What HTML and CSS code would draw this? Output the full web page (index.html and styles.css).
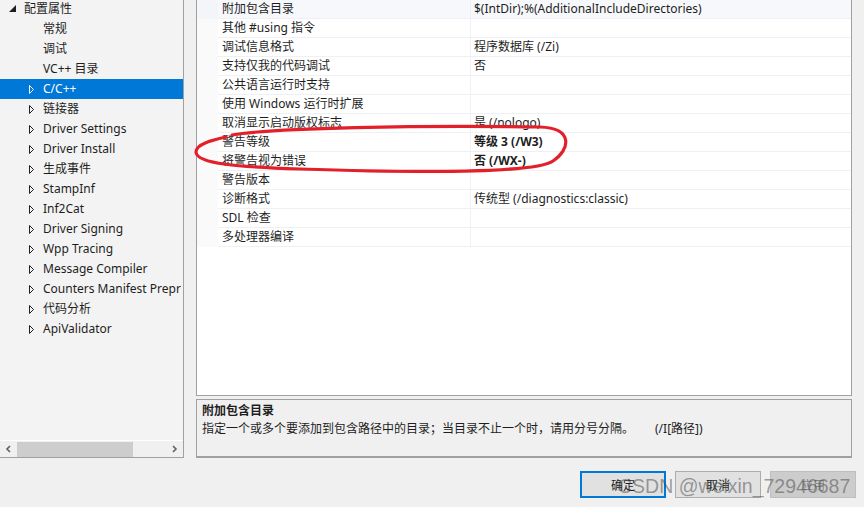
FILE: index.html
```html
<!DOCTYPE html>
<html lang="zh-CN">
<head>
    <meta charset="UTF-8">
    <meta name="viewport" content="width=device-width, initial-scale=1.0">
    <title>属性页</title>
    <link rel="stylesheet" href="styles.css">
</head>
<body>

<div class="window">
    <div class="main">
        <div class="tree">
            <ul class="tree-list">
                <li class="node root">
                    <svg class="caret" width="7" height="7" viewBox="0 0 7 7"><polygon points="7,0 7,7 0,7" fill="#1e1e1e"/></svg>
                    <span class="label">配置属性</span>
                </li>
                <li class="node leaf"><span class="label">常规</span></li>
                <li class="node leaf"><span class="label">调试</span></li>
                <li class="node leaf"><span class="label">VC++ 目录</span></li>
                <li class="node branch selected"><svg class="arrow" width="6" height="9" viewBox="0 0 6 9"><polygon points="0.5,0.5 4.5,4.5 0.5,8.5"/></svg><span class="label">C/C++</span></li>
                <li class="node branch"><svg class="arrow" width="6" height="9" viewBox="0 0 6 9"><polygon points="0.5,0.5 4.5,4.5 0.5,8.5"/></svg><span class="label">链接器</span></li>
                <li class="node branch"><svg class="arrow" width="6" height="9" viewBox="0 0 6 9"><polygon points="0.5,0.5 4.5,4.5 0.5,8.5"/></svg><span class="label">Driver Settings</span></li>
                <li class="node branch"><svg class="arrow" width="6" height="9" viewBox="0 0 6 9"><polygon points="0.5,0.5 4.5,4.5 0.5,8.5"/></svg><span class="label">Driver Install</span></li>
                <li class="node branch"><svg class="arrow" width="6" height="9" viewBox="0 0 6 9"><polygon points="0.5,0.5 4.5,4.5 0.5,8.5"/></svg><span class="label">生成事件</span></li>
                <li class="node branch"><svg class="arrow" width="6" height="9" viewBox="0 0 6 9"><polygon points="0.5,0.5 4.5,4.5 0.5,8.5"/></svg><span class="label">StampInf</span></li>
                <li class="node branch"><svg class="arrow" width="6" height="9" viewBox="0 0 6 9"><polygon points="0.5,0.5 4.5,4.5 0.5,8.5"/></svg><span class="label">Inf2Cat</span></li>
                <li class="node branch"><svg class="arrow" width="6" height="9" viewBox="0 0 6 9"><polygon points="0.5,0.5 4.5,4.5 0.5,8.5"/></svg><span class="label">Driver Signing</span></li>
                <li class="node branch"><svg class="arrow" width="6" height="9" viewBox="0 0 6 9"><polygon points="0.5,0.5 4.5,4.5 0.5,8.5"/></svg><span class="label">Wpp Tracing</span></li>
                <li class="node branch"><svg class="arrow" width="6" height="9" viewBox="0 0 6 9"><polygon points="0.5,0.5 4.5,4.5 0.5,8.5"/></svg><span class="label">Message Compiler</span></li>
                <li class="node branch"><svg class="arrow" width="6" height="9" viewBox="0 0 6 9"><polygon points="0.5,0.5 4.5,4.5 0.5,8.5"/></svg><span class="label">Counters Manifest Prepr</span></li>
                <li class="node branch"><svg class="arrow" width="6" height="9" viewBox="0 0 6 9"><polygon points="0.5,0.5 4.5,4.5 0.5,8.5"/></svg><span class="label">代码分析</span></li>
                <li class="node branch"><svg class="arrow" width="6" height="9" viewBox="0 0 6 9"><polygon points="0.5,0.5 4.5,4.5 0.5,8.5"/></svg><span class="label">ApiValidator</span></li>
            </ul>
            <div class="hscroll">
                <svg class="chev" width="8" height="8" viewBox="0 0 8 8"><polyline points="5.5,1 2.5,4 5.5,7"/></svg>
                <div class="track"><div class="thumb"></div></div>
                <svg class="chev" width="8" height="8" viewBox="0 0 8 8"><polyline points="2.5,1 5.5,4 2.5,7"/></svg>
            </div>
        </div>

        <div class="right">
            <div class="grid">
                <div class="rows">
                    <div class="row current"><div class="pad"></div><div class="name">附加包含目录</div><div class="value">$(IntDir);%(AdditionalIncludeDirectories)</div></div>
                    <div class="row"><div class="pad"></div><div class="name">其他 #using 指令</div><div class="value"></div></div>
                    <div class="row"><div class="pad"></div><div class="name">调试信息格式</div><div class="value">程序数据库 (/Zi)</div></div>
                    <div class="row"><div class="pad"></div><div class="name">支持仅我的代码调试</div><div class="value">否</div></div>
                    <div class="row"><div class="pad"></div><div class="name">公共语言运行时支持</div><div class="value"></div></div>
                    <div class="row"><div class="pad"></div><div class="name">使用 Windows 运行时扩展</div><div class="value"></div></div>
                    <div class="row"><div class="pad"></div><div class="name">取消显示启动版权标志</div><div class="value">是 (/nologo)</div></div>
                    <div class="row"><div class="pad"></div><div class="name">警告等级</div><div class="value bold">等级 3 (/W3)</div></div>
                    <div class="row"><div class="pad"></div><div class="name">将警告视为错误</div><div class="value bold">否 (/WX-)</div></div>
                    <div class="row"><div class="pad"></div><div class="name">警告版本</div><div class="value"></div></div>
                    <div class="row"><div class="pad"></div><div class="name">诊断格式</div><div class="value">传统型 (/diagnostics:classic)</div></div>
                    <div class="row"><div class="pad"></div><div class="name">SDL 检查</div><div class="value"></div></div>
                    <div class="row"><div class="pad"></div><div class="name">多处理器编译</div><div class="value"></div></div>
                </div>
            </div>
            <div class="desc">
                <div class="desc-title">附加包含目录</div>
                <div class="desc-text">指定一个或多个要添加到包含路径中的目录；当目录不止一个时，请用分号分隔。<span class="flag">(/I[路径])</span></div>
            </div>
        </div>
    </div>

    <div class="buttons">
        <button class="btn default">确定</button>
        <button class="btn">取消</button>
        <button class="btn disabled">应用</button>
    </div>

    <div class="watermark">CSDN @weixin_72946687</div>

    <!-- red marker drawn over the screenshot -->
    <svg class="ink" width="864" height="507" viewBox="0 0 864 507">
        <path d="M232,135 C270,128 420,125 540,127 C574,128 570,150 553,161 C536,173 420,173 300,169 C240,167 196,164 196,152 C196,144 212,140 226,137" fill="none" stroke="#e3202a" stroke-width="3.2" stroke-linecap="round"/>
    </svg>
</div>

</body>
</html>
```

FILE: styles.css
```css
* {box-sizing: border-box; margin: 0; padding: 0;}

body {
    font-family: "Noto Sans", "Noto Sans CJK SC", sans-serif;
    font-size: 12px;
    color: #1e1e1e;
    background: #f0f0f0;
    width: 864px;
    height: 507px;
    overflow: hidden;
}

.window {
    position: relative;
    width: 864px;
    height: 507px;
}

.main {
    display: flex;
    height: 458px;
}

/* left tree */
.tree {
    width: 184px;
    height: 458px;
    background: #f3f3f3;
    border-right: 1px solid #a0a0a0;
    border-bottom: 1px solid #a0a0a0;
    display: flex;
    flex-direction: column;
    overflow: hidden;
}

.tree-list {
    list-style: none;
    flex: 1;
    margin-top: -1px;
    overflow: hidden;
}

.node {
    height: 20px;
    line-height: 20px;
    white-space: nowrap;
    display: flex;
    align-items: center;
    overflow: hidden;
}

.node svg {flex-shrink: 0;}
.node .label {flex-shrink: 0;}

.node.root {padding-left: 9px;}
.node.root .caret {margin-right: 8px; margin-top: -1px;}
.node.leaf {padding-left: 43px;}
.node.branch {padding-left: 29px;}

.arrow {
    margin-right: 8px;
    fill: none;
    stroke: #1e1e1e;
    stroke-width: 1;
}

.node.selected {
    background: #0078d7;
    color: #fff;
}

.node.selected .arrow {stroke: #fff;}

.hscroll {
    height: 17px;
    flex-shrink: 0;
    display: flex;
    align-items: center;
    background: #f0f0f0;
    border-top: 1px solid #fff;
}

.chev {
    width: 17px;
    fill: none;
    stroke: #606060;
    stroke-width: 1.6;
}

.track {
    flex: 1;
    height: 15px;
}

.thumb {
    width: 116px;
    height: 15px;
    background: #cdcdcd;
}

/* right side */
.right {
    margin-left: 12px;
    width: 656px;
    display: flex;
    flex-direction: column;
}

.grid {
    height: 396px;
    background: #fff;
    border: 1px solid #a0a0a0;
    border-top: none;
    overflow: hidden;
}

.row {
    display: grid;
    grid-template-columns: 21px 252px 1fr;
    height: 19px;
    line-height: 18px;
    white-space: nowrap;
}

.row .pad {background: #fafafa;}

.row .name {
    padding-left: 4px;
    border-bottom: 1px solid #eef0f4;
}

.row .value {
    padding-left: 3px;
    border-left: 1px solid #eef0f4;
    border-bottom: 1px solid #eef0f4;
}

.row.current .name, .row.current .value {background: #f6f8fb;}
.row.current .pad {background: #f3f5f9;}

.value.bold {font-weight: bold;}

.desc {
    margin-top: 3px;
    height: 59px;
    border: 1px solid #a0a0a0;
    border-bottom: 2px solid #a0a0a0;
    padding: 2px 5px;
    line-height: 18px;
}

.desc-title {font-weight: bold;}

.flag {margin-left: 21px;}

/* bottom buttons */
.buttons {
    display: flex;
    justify-content: flex-end;
    gap: 9px;
    padding-right: 8px;
    margin-top: 13px;
}

.btn {
    width: 86px;
    height: 27px;
    font-family: "Noto Sans CJK SC", sans-serif;
    font-size: 12px;
    color: #1e1e1e;
    background: #e1e1e1;
    border: 1px solid #adadad;
}

.btn.default {border: 2px solid #0078d7;}

.btn.disabled {
    background: #cccccc;
    border-color: #bfbfbf;
    color: #838383;
}

.watermark {
    position: absolute;
    left: 618px;
    top: 475px;
    font-family: "Liberation Sans", Arial, sans-serif;
    font-size: 19.5px;
    color: rgba(70, 70, 70, 0.5);
    white-space: nowrap;
    pointer-events: none;
}

.ink {
    position: absolute;
    left: 0;
    top: 0;
    pointer-events: none;
}
```
